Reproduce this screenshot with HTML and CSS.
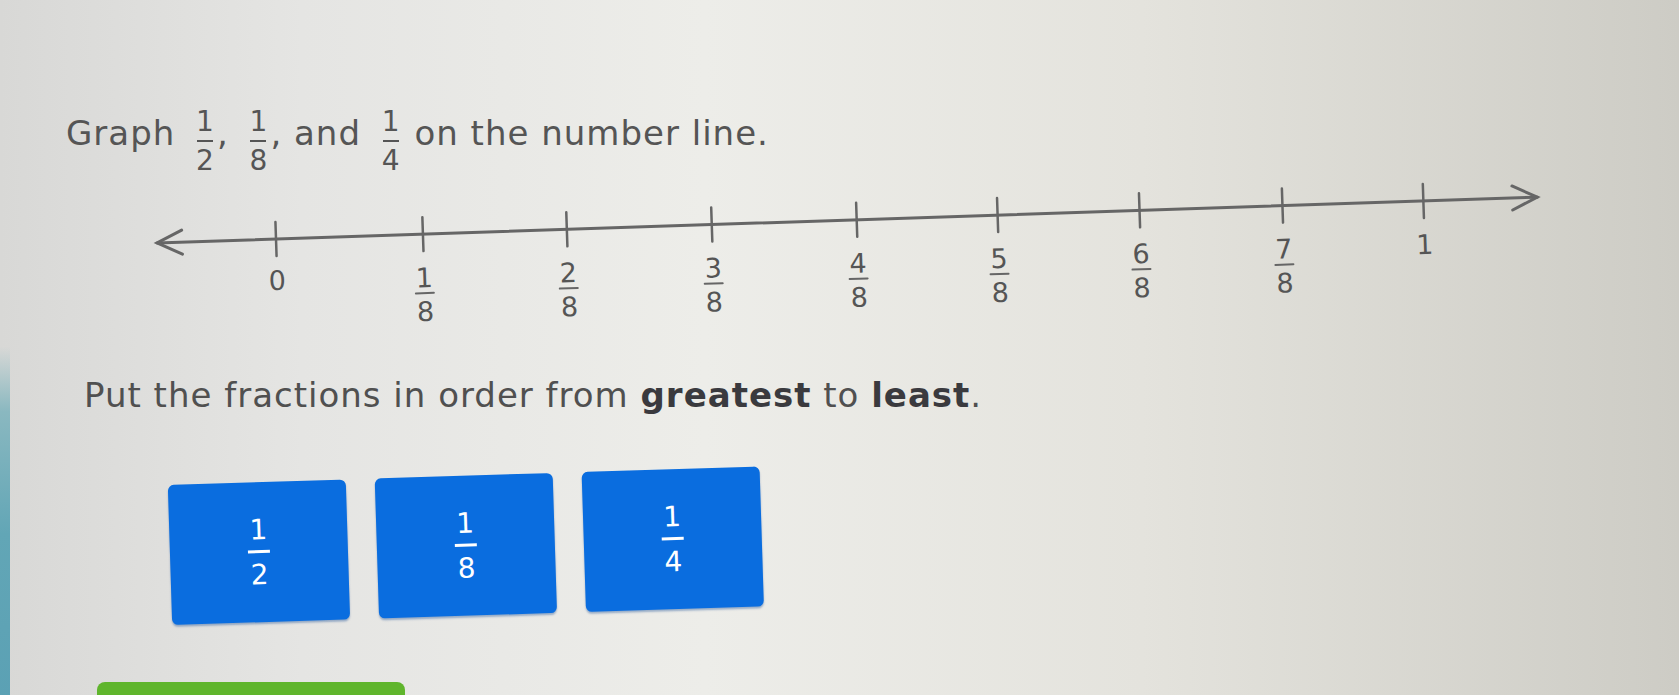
FILE: index.html
```html
<!DOCTYPE html>
<html lang="en">
<head>
    <meta charset="UTF-8">
    <meta name="viewport" content="width=device-width, initial-scale=1.0">
    <title>Order Fractions</title>
    <link rel="stylesheet" href="styles.css">
</head>
<body>

<div class="screen">
    <div class="edge"></div>

    <div class="lesson">
        <p class="prompt">
            Graph <span class="frac"><span>1</span><span class="bar"></span><span>2</span></span>,
            <span class="frac"><span>1</span><span class="bar"></span><span>8</span></span>,
            and <span class="frac"><span>1</span><span class="bar"></span><span>4</span></span>
            on the number line.
        </p>

        <!-- number line from 0 to 1 in eighths -->
        <svg class="number-line" width="1440" height="160" viewBox="0 0 1440 160">
            <g transform="rotate(-1.9 136 57)" stroke="#666" fill="none" stroke-linecap="round">
                <line x1="17" y1="57" x2="1398" y2="57" stroke-width="3"/>
                <polyline points="42,45 17,57 42,69" stroke-width="3"/>
                <polyline points="1373,45 1398,57 1373,69" stroke-width="3"/>

                <g stroke-width="2.5">
                    <line x1="136" y1="40" x2="136" y2="74"/>
                    <line x1="283" y1="40" x2="283" y2="74"/>
                    <line x1="427" y1="40" x2="427" y2="74"/>
                    <line x1="572" y1="40" x2="572" y2="74"/>
                    <line x1="717" y1="40" x2="717" y2="74"/>
                    <line x1="858" y1="40" x2="858" y2="74"/>
                    <line x1="1000" y1="40" x2="1000" y2="74"/>
                    <line x1="1143" y1="40" x2="1143" y2="74"/>
                    <line x1="1284" y1="40" x2="1284" y2="74"/>
                </g>

                <g stroke-width="2">
                    <line x1="274" y1="116" x2="292" y2="116"/>
                    <line x1="418" y1="116" x2="436" y2="116"/>
                    <line x1="563" y1="116" x2="581" y2="116"/>
                    <line x1="708" y1="116" x2="726" y2="116"/>
                    <line x1="849" y1="116" x2="867" y2="116"/>
                    <line x1="991" y1="116" x2="1009" y2="116"/>
                    <line x1="1134" y1="116" x2="1152" y2="116"/>
                </g>

                <g class="nl-labels" stroke="none" fill="#555" text-anchor="middle">
                    <text x="136" y="108">0</text>
                    <text x="283" y="110">1</text><text x="283" y="144">8</text>
                    <text x="427" y="110">2</text><text x="427" y="144">8</text>
                    <text x="572" y="110">3</text><text x="572" y="144">8</text>
                    <text x="717" y="110">4</text><text x="717" y="144">8</text>
                    <text x="858" y="110">5</text><text x="858" y="144">8</text>
                    <text x="1000" y="110">6</text><text x="1000" y="144">8</text>
                    <text x="1143" y="110">7</text><text x="1143" y="144">8</text>
                    <text x="1284" y="110">1</text>
                </g>
            </g>
        </svg>

        <p class="instruction">Put the fractions in order from <strong>greatest</strong> to <strong>least</strong>.</p>

        <div class="tiles">
            <div class="tile"><span class="frac"><span>1</span><span class="bar"></span><span>2</span></span></div>
            <div class="tile"><span class="frac"><span>1</span><span class="bar"></span><span>8</span></span></div>
            <div class="tile"><span class="frac"><span>1</span><span class="bar"></span><span>4</span></span></div>
        </div>

        <button class="submit" aria-label="Submit"></button>
    </div>
</div>

</body>
</html>
```

FILE: styles.css
```css
body {
    font-family: "DejaVu Sans", Verdana, sans-serif;
    margin: 0;
    padding: 0;
    height: 695px;
    overflow: hidden;
    background: linear-gradient(90deg, #d8d8d6 0%, #e5e5e3 18%, #edede9 42%, #e4e3dd 68%, #cdccc5 100%);
}

.screen {
    display: flex;
    min-height: 695px;
}

.edge {
    width: 10px;
    flex-shrink: 0;
    background: linear-gradient(180deg, transparent 48%, #8ab8c0 57%, #62a6b6 74%, #5aa0b4 100%);
}

.lesson {
    flex: 1;
    padding-left: 56px;
}

.prompt {
    margin: 0;
    padding-top: 93px;
    font-size: 34px;
    line-height: 80px;
    letter-spacing: 1px;
    color: #555;
}

.frac {
    display: inline-flex;
    flex-direction: column;
    align-items: center;
    font-size: 28px;
    line-height: 28px;
    letter-spacing: 0;
    vertical-align: 14px;
    margin: 0 3px 0 9px;
}

.frac .bar {
    width: 16px;
    height: 2px;
    margin: 4px 0 5px;
    background-color: #555;
}

.number-line {
    display: block;
    margin: 7px 0 0 74px;
}

.nl-labels {
    font-family: "DejaVu Sans", Verdana, sans-serif;
    font-size: 27px;
}

.instruction {
    margin: 33px 0 0 18px;
    font-size: 34px;
    line-height: 40px;
    letter-spacing: 1px;
    color: #505050;
}

.instruction strong {
    color: #3a3a3e;
}

.tiles {
    display: flex;
    gap: 29px;
    margin: 70px 0 0 104px;
    transform: rotate(-1.8deg);
    transform-origin: left center;
}

.tile {
    width: 178px;
    height: 140px;
    display: flex;
    align-items: center;
    justify-content: center;
    background-color: #0a6ddf;
    border-radius: 6px;
    box-shadow: 0 2px 2px rgba(0, 60, 140, 0.35);
}

.tile .frac {
    color: white;
    font-size: 28px;
    line-height: 28px;
    vertical-align: baseline;
    margin: 0;
}

.tile .frac .bar {
    width: 22px;
    height: 3px;
    margin: 6px 0 8px;
    background-color: white;
}

.submit {
    display: block;
    width: 308px;
    height: 40px;
    margin: 57px 0 0 31px;
    border: none;
    border-radius: 8px 8px 0 0;
    background-color: #5fb52c;
    cursor: pointer;
}
```
